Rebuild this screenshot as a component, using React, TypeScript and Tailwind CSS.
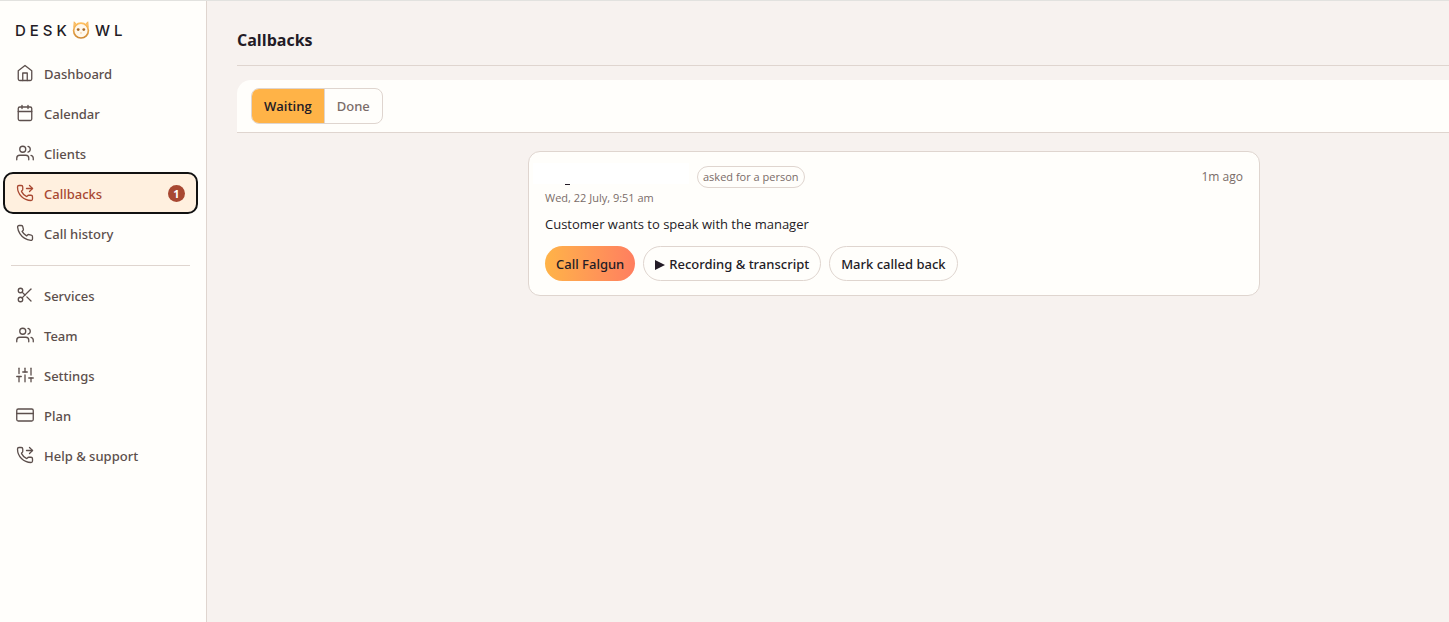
import type { ComponentType } from "react";
import { PhoneForwarded } from "lucide-react";
import {
  FiCalendar,
  FiCreditCard,
  FiHome,
  FiPhone,
  FiScissors,
  FiSliders,
  FiUsers,
} from "react-icons/fi";

type IconProps = { className?: string; strokeWidth?: string | number };
type NavEntry = { label: string; icon: ComponentType<IconProps>; count?: number };

const primaryNav: NavEntry[] = [
  { label: "Dashboard", icon: FiHome },
  { label: "Calendar", icon: FiCalendar },
  { label: "Clients", icon: FiUsers },
  { label: "Callbacks", icon: PhoneForwarded, count: 1 },
  { label: "Call history", icon: FiPhone },
];

const secondaryNav: NavEntry[] = [
  { label: "Services", icon: FiScissors },
  { label: "Team", icon: FiUsers },
  { label: "Settings", icon: FiSliders },
  { label: "Plan", icon: FiCreditCard },
  { label: "Help & support", icon: PhoneForwarded },
];

function OwlMark() {
  return (
    <svg viewBox="0 0 18 18" className="size-[18px]" aria-hidden="true">
      <defs>
        <linearGradient id="owl" x1="0" y1="0" x2="0" y2="1">
          <stop offset="0" stopColor="#ffbf5e" />
          <stop offset="1" stopColor="#cf8a35" />
        </linearGradient>
      </defs>
      <path d="M1.8 6.4 2.2.8 4.6 3.6M16.2 6.4 15.8.8 13.4 3.6" fill="#ffc877" stroke="#f6b556" strokeWidth="1" strokeLinejoin="round" />
      <circle cx="9" cy="9.6" r="7.4" fill="#fff8ec" stroke="url(#owl)" strokeWidth="1.7" />
      <circle cx="6.2" cy="8.6" r="1.4" fill="#a86a2a" />
      <circle cx="11.8" cy="8.6" r="1.4" fill="#a86a2a" />
      <path d="M8 11.6h2l-1 1.3z" fill="#f3c184" />
    </svg>
  );
}

function NavList({ items }: { items: NavEntry[] }) {
  return (
    <ul className="flex flex-col gap-0.5">
      {items.map(({ label, icon: Icon, count }) => (
        <li key={label}>
          <a
            href="#"
            aria-current={count ? "page" : undefined}
            className={
              count
                ? "flex h-[38px] items-center gap-2.5 rounded-lg bg-[#fff0df] px-[11px] text-[#a84832] outline-2 outline-[#111111]"
                : "flex h-[38px] items-center gap-2.5 rounded-lg px-[11px] text-[#5c4f4c]"
            }
          >
            <Icon className="size-[18px] shrink-0" strokeWidth={1.75} />
            <span className="grow pt-1">{label}</span>
            {count && (
              <span className="flex size-[17px] items-center justify-center rounded-full bg-[#a84832] text-[11px] leading-none font-bold text-white">
                {count}
              </span>
            )}
          </a>
        </li>
      ))}
    </ul>
  );
}

export default function App() {
  return (
    <div className="flex min-h-screen overflow-x-hidden border-t border-[#e2e2df] bg-[#f7f2ef] font-['Open_Sans',sans-serif] text-[#231b26]">
      <aside className="w-[207px] shrink-0 border-r border-[#dfd5cf] bg-[#fffefb] font-['Noto_Sans',sans-serif] text-[13px] font-medium">
        <a href="#" aria-label="Deskowl" className="flex h-[53px] items-center gap-px pt-1 pl-[15px] font-[Inter,sans-serif] text-[15px] font-medium">
          <span className="pt-1 tracking-[4px]">DESK</span>
          <OwlMark />
          <span className="pt-1 pl-1 tracking-[4px]">WL</span>
        </a>
        <nav className="pr-[10px] pl-[5px]">
          <NavList items={primaryNav} />
          <hr className="mx-1.5 mt-[13px] mb-2.5 border-[#dfd5cf]" />
          <NavList items={secondaryNav} />
        </nav>
      </aside>

      <main className="min-w-0 grow pl-[30px]">
        <header className="flex h-[65px] items-center border-b border-[#dfd5cf]">
          <h1 className="pt-3.5 text-[16px] font-bold">Callbacks</h1>
        </header>
        <div className="mt-3.5 flex h-[53px] items-center rounded-tl-[14px] border-b border-[#dfd5cf] bg-[#fffefb] px-3.5">
          <div className="flex h-9 overflow-hidden rounded-lg border border-[#dfd5cf] text-[13px]">
            <button type="button" aria-pressed="true" className="border-r border-[#dfd5cf] bg-[#ffb347] px-3 pt-0.5 font-semibold">
              Waiting
            </button>
            <button type="button" aria-pressed="false" className="px-3 pt-0.5 font-['Noto_Sans',sans-serif] font-medium text-[#7a6c68]">
              Done
            </button>
          </div>
        </div>

        <div className="pt-[18px] pl-[102px]">
          <article className="mx-auto w-full max-w-[732px] rounded-xl border border-[#dfd5cf] bg-[#fffefb] px-4 py-3.5">
            <div className="flex h-[22px] items-center gap-2">
              <div className="relative -ml-3 h-full w-[156px]">
                <span className="absolute inset-x-0 -top-[3px] h-[21px] bg-white" />
                <span className="absolute top-[18px] left-8 h-px w-[5px] bg-[#231b26]" />
              </div>
              <span className="rounded-full border border-[#dfd5cf] px-[5px] text-[11px] leading-5 text-[#7a6c68]">asked for a person</span>
              <time className="ml-auto text-xs text-[#7a6c68]">1m ago</time>
            </div>
            <p className="text-[11px] leading-5 text-[#7a6c68]">Wed, 22 July, 9:51 am</p>
            <p className="mt-1.5 text-[13px] leading-5">Customer wants to speak with the manager</p>
            <div className="mt-3 flex gap-2 font-['Noto_Sans',sans-serif] text-[13px] font-medium">
              <button type="button" className="h-[35px] rounded-full bg-linear-to-r from-[#ffb347] to-[#ff7e5f] px-[11px] pt-0.5">
                Call Falgun
              </button>
              <button type="button" className="flex h-[35px] items-center gap-1 rounded-full border border-[#dfd5cf] px-[11px] pt-0.5">
                <svg viewBox="0 0 10 10" className="size-2.5" aria-hidden="true">
                  <path d="M0 0 10 5 0 10z" fill="currentColor" />
                </svg>
                Recording &amp; transcript
              </button>
              <button type="button" className="h-[35px] rounded-full border border-[#dfd5cf] px-[11px] pt-0.5">
                Mark called back
              </button>
            </div>
          </article>
        </div>
      </main>
    </div>
  );
}
